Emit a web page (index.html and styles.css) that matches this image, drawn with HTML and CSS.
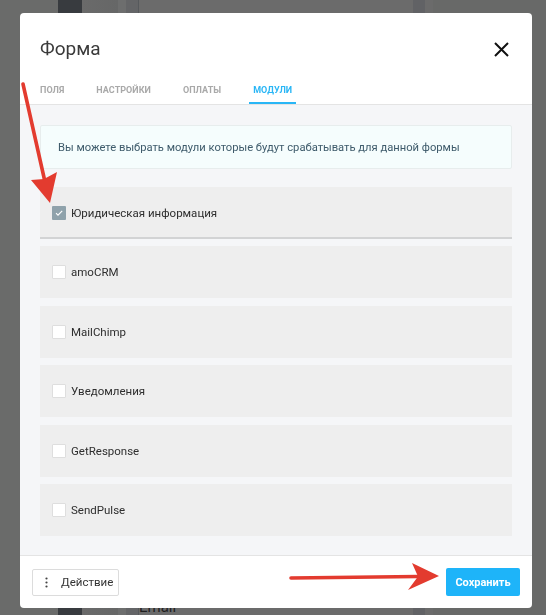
FILE: index.html
```html
<!DOCTYPE html>
<html lang="ru">
<head>
<meta charset="utf-8">
<title>Форма</title>
<link rel="stylesheet" href="styles.css">
</head>
<body>
<div class="page">
  <div class="col c1"></div>
  <div class="col c2"></div>
  <div class="col c3"></div>
  <div class="col c4"></div>
  <div class="col c5"></div>
  <div class="col c6"></div>
  <div class="col c7"><span class="behind-text">Email</span></div>
  <div class="col c8"></div>
  <div class="col c9"></div>
  <div class="col c10"></div>
</div>

<div class="modal">
  <div class="modal-header">
    <div class="title-row">
      <h2 class="title">Форма</h2>
      <button class="close" aria-label="Закрыть">
        <svg width="15" height="15" viewBox="0 0 15 15"><path d="M1 1 L14 14 M14 1 L1 14" stroke="#111" stroke-width="2" fill="none"/></svg>
      </button>
    </div>
    <div class="tabs">
      <div class="tab">Поля</div>
      <div class="tab">Настройки</div>
      <div class="tab">Оплаты</div>
      <div class="tab active">Модули</div>
    </div>
  </div>

  <div class="modal-body">
    <div class="info">Вы можете выбрать модули которые будут срабатывать для данной формы</div>
    <div class="rows">
      <div class="row open">
        <span class="check checked">
          <svg width="14" height="14" viewBox="0 0 14 14"><path d="M4 7.2 L6 9.2 L10.2 4.8" stroke="#fff" stroke-width="1.1" fill="none"/></svg>
        </span>
        <span class="label">Юридическая информация</span>
      </div>
      <div class="row"><span class="check"></span><span class="label">amoCRM</span></div>
      <div class="row"><span class="check"></span><span class="label">MailChimp</span></div>
      <div class="row"><span class="check"></span><span class="label">Уведомления</span></div>
      <div class="row"><span class="check"></span><span class="label">GetResponse</span></div>
      <div class="row"><span class="check"></span><span class="label">SendPulse</span></div>
    </div>
  </div>

  <div class="modal-footer">
    <button class="btn-action">
      <svg width="3" height="11" viewBox="0 0 3 11"><circle cx="1.5" cy="1.5" r="1.1" fill="#444"/><circle cx="1.5" cy="5.5" r="1.1" fill="#444"/><circle cx="1.5" cy="9.5" r="1.1" fill="#444"/></svg>
      <span>Действие</span>
    </button>
    <button class="btn-save">Сохранить</button>
  </div>
</div>

<svg class="arrows" width="546" height="615" viewBox="0 0 546 615">
  <line x1="23" y1="84" x2="45" y2="182" stroke="#e33b2f" stroke-width="3.6" stroke-linecap="round"/>
  <polygon points="50,203 31,180 44,179 57,172" fill="#e33b2f"/>
  <line x1="291" y1="578" x2="418" y2="576.5" stroke="#e33b2f" stroke-width="3.6" stroke-linecap="round"/>
  <polygon points="439,576 412,563 418,576.5 408,590" fill="#e33b2f"/>
</svg>
</body>
</html>
```
FILE: styles.css
```css
* { box-sizing: border-box; }

html, body {
  margin: 0;
  padding: 0;
  width: 546px;
  height: 615px;
  overflow: hidden;
  font-family: Roboto, "Liberation Sans", Arial, sans-serif;
}

.page {
  display: flex;
  height: 615px;
  background: #6b6b6b;
}
.col { height: 100%; }
.c1 { width: 58px; background: #6a6b6a; }
.c2 { width: 24px; background: #383b3f; }
.c3 { width: 36px; background: linear-gradient(90deg, #6a6a6a, #666767); }
.c4 { width: 8px; background: #6d6e6e; }
.c5 { width: 12px; background: #646567; }
.c6 { width: 1px; background: #56595c; }
.c7 {
  width: 274px;
  background: #6b6b6b;
  display: flex;
  flex-direction: column;
  justify-content: flex-end;
}
.c8 { width: 12px; background: #616265; }
.c9 { width: 8px; background: #6b6b6b; }
.c10 { width: 113px; background: #686968; }

.behind-text {
  font-size: 15px;
  line-height: 16px;
  color: #1f1f1f;
}

.modal {
  position: fixed;
  left: 20px;
  top: 13px;
  width: 512px;
  height: 595px;
  background: #fff;
  border-radius: 4px;
  display: flex;
  flex-direction: column;
  overflow: hidden;
}

.modal-header {
  padding: 24px 23px 0 20px;
  border-bottom: 1px solid #e4e4e4;
}
.title-row {
  display: flex;
  align-items: center;
  justify-content: space-between;
  height: 24px;
}
.title {
  margin: 0;
  font-size: 19px;
  font-weight: 400;
  color: #3a3a3a;
  line-height: 24px;
}
.close {
  border: 0;
  background: none;
  padding: 0;
  width: 15px;
  height: 15px;
  display: flex;
}

.tabs {
  display: flex;
  gap: 24px;
  margin-top: 13px;
  margin-left: -4px;
}
.tab {
  padding: 10px 4px 6px;
  font-size: 9px;
  line-height: 12px;
  font-weight: 700;
  letter-spacing: 0.05px;
  text-transform: uppercase;
  color: #a9a9a9;
  border-bottom: 2px solid transparent;
}
.tab.active {
  color: #29b6f6;
  border-bottom-color: #29b6f6;
}

.modal-body {
  flex: 1;
  background: #f5f6f8;
  padding: 20px 20px 0;
}
.info {
  height: 44px;
  border: 1px solid #e7eded;
  border-radius: 2px;
  background: #f5fdfd;
  padding: 0 17px;
  display: flex;
  align-items: center;
  font-size: 11.2px;
  color: #3e5b6b;
}
.rows {
  margin-top: 18px;
  display: flex;
  flex-direction: column;
  gap: 7.4px;
}
.row {
  height: 52px;
  background: #eeeeee;
  display: flex;
  align-items: center;
  padding-left: 12px;
}
.row.open {
  border-bottom: 2px solid #d2d3d4;
  padding-top: 1px;
}
.check {
  width: 14px;
  height: 14px;
  background: #fff;
  border: 1px solid #dedede;
  border-radius: 1px;
  display: flex;
}
.check.checked {
  background: #8fa2ab;
  border: 0;
}
.label {
  margin-left: 5px;
  font-size: 11.5px;
  color: #2e2e2e;
}

.modal-footer {
  height: 53px;
  border-top: 1px solid #e4e4e4;
  display: flex;
  align-items: center;
  justify-content: space-between;
  padding: 0 12px;
}
.btn-action {
  height: 27px;
  width: 87px;
  border: 1px solid #dcdcdc;
  border-radius: 2px;
  background: #fff;
  display: flex;
  align-items: center;
  gap: 13px;
  padding: 0 0 0 12px;
  font-family: inherit;
  font-size: 11.5px;
  color: #333;
}
.btn-save {
  height: 28px;
  width: 74px;
  border: 0;
  border-radius: 2px;
  background: #1eb4f9;
  color: #fff;
  font-family: inherit;
  font-size: 11px;
  font-weight: 700;
  padding: 0;
}

.arrows {
  position: fixed;
  left: 0;
  top: 0;
  pointer-events: none;
}
```
